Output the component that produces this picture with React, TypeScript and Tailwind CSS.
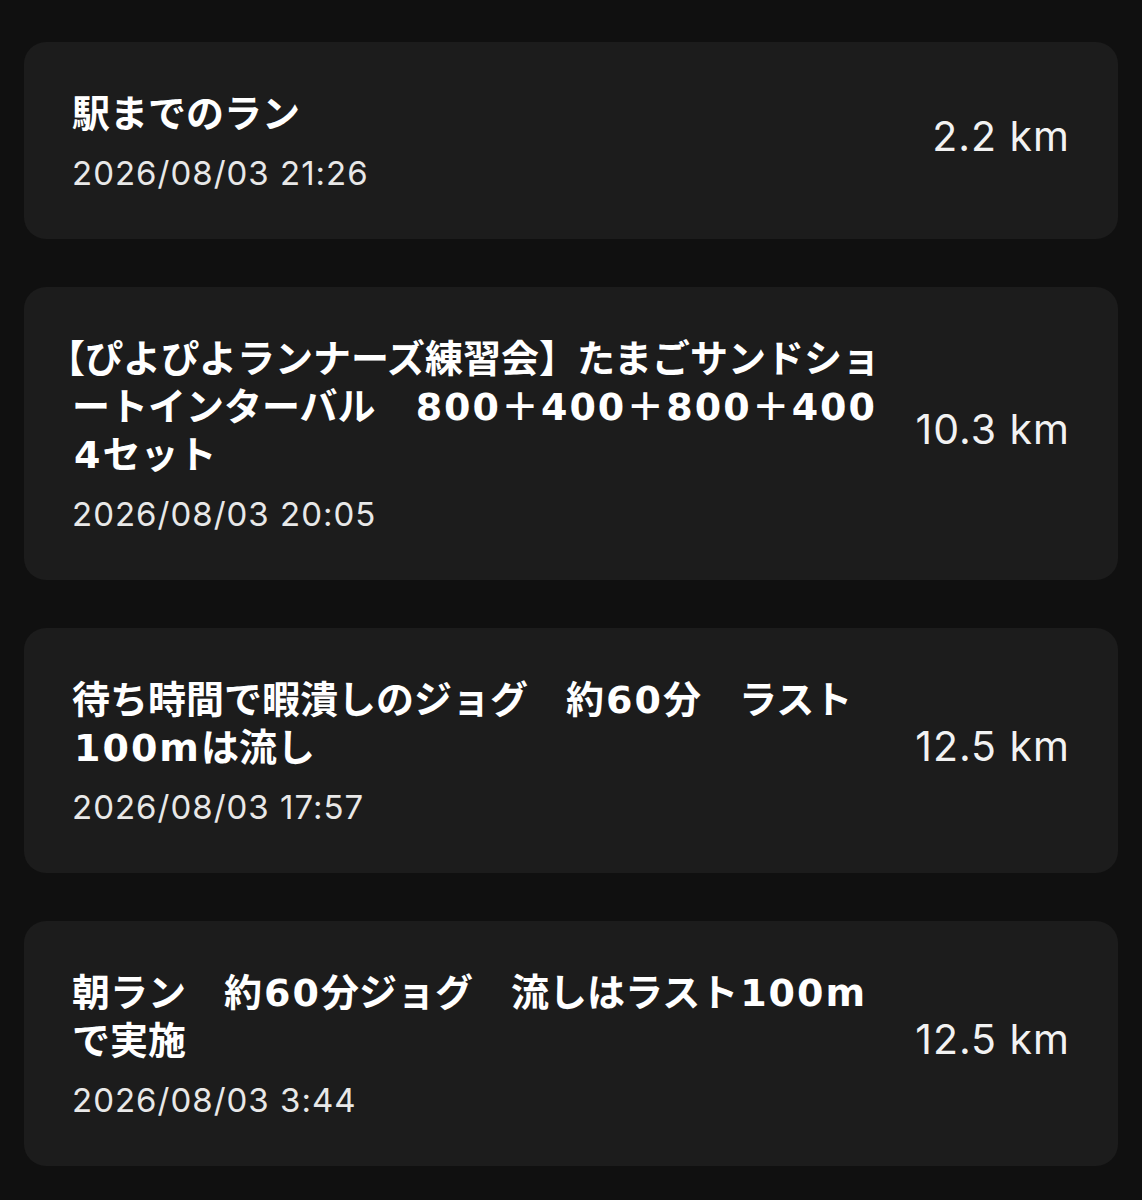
const runs = [
  { title: '駅までのラン', date: '2026/08/03 21:26', km: '2.2 km' },
  {
    title: '【ぴよぴよランナーズ練習会】たまごサンドショートインターバル　800＋400＋800＋400　4セット',
    date: '2026/08/03 20:05',
    km: '10.3 km',
  },
  { title: '待ち時間で暇潰しのジョグ　約60分　ラスト100mは流し', date: '2026/08/03 17:57', km: '12.5 km' },
  { title: '朝ラン　約60分ジョグ　流しはラスト100mで実施', date: '2026/08/03 3:44', km: '12.5 km' },
]

const latin = { fontFamily: 'Inter, "Noto Sans CJK JP", sans-serif' }

// Latin runs inside a Japanese title get the wide, round digits of the phone font
function Title({ text }: { text: string }) {
  const parts = text.split(/([0-9A-Za-z]+|【)/).filter(Boolean)
  return (
    <p
      className="-mt-[3px] text-[38px] font-semibold leading-[48px] text-white"
      style={{ fontFamily: '"Noto Sans CJK JP", sans-serif' }}
    >
      {parts.map((p, i) => {
        if (p === '【') {
          return (
            <span key={i} className="-ml-[6px] [font-feature-settings:'halt']">
              {p}
            </span>
          )
        }
        if (/^[0-9A-Za-z]+$/.test(p)) {
          return (
            <span
              key={i}
              className="ml-[2px] leading-none tracking-[2px]"
              style={{ fontFamily: '"DejaVu Sans", sans-serif' }}
            >
              {p}
            </span>
          )
        }
        return <span key={i}>{p}</span>
      })}
    </p>
  )
}

function RunCard({ title, date, km }: { title: string; date: string; km: string }) {
  return (
    <div className="flex items-center gap-6 rounded-[22px] bg-[#1c1c1c] px-12 pt-12 pb-11">
      <div className="min-w-0 flex-1">
        <Title text={title} />
        <p className="mt-[16px] text-[33px] leading-[44px] tracking-[1px] text-[#e8e8e8]">{date}</p>
      </div>
      <div className="-mt-[14px] w-[160px] shrink-0 whitespace-nowrap text-right text-[41px] leading-[48px] tracking-[1px] text-[#f2f2f2]">
        {km}
      </div>
    </div>
  )
}

export default function App() {
  return (
    <div className="min-h-[1200px] bg-[#101010] px-6 pt-[42px] pb-[35px]" style={latin}>
      <div className="flex flex-col gap-12">
        {runs.map(r => (
          <RunCard key={r.date} {...r} />
        ))}
      </div>
    </div>
  )
}
